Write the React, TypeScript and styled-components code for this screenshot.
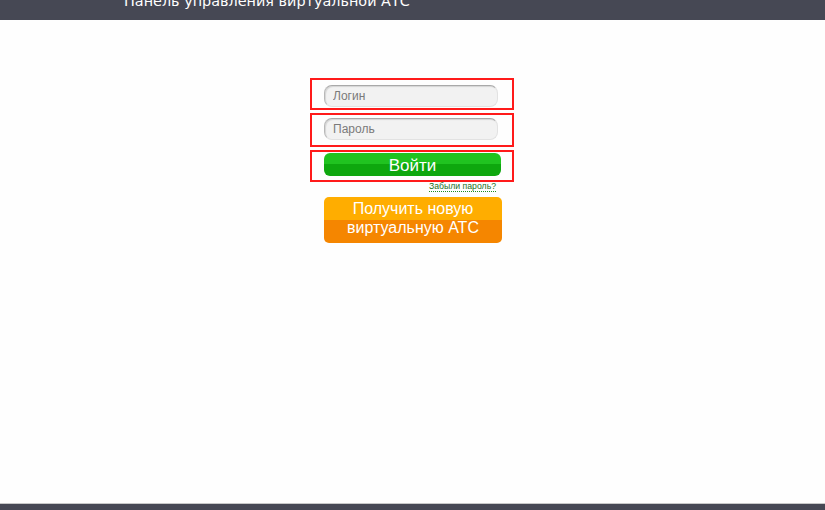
import React from "react";
import styled, { createGlobalStyle } from "styled-components";

const Global = createGlobalStyle`
  html, body { margin: 0; padding: 0; background: #fefefe; }
  body { font-family: "Liberation Sans", Arial, sans-serif; }
`;

const Page = styled.div`
  display: flex;
  flex-direction: column;
  height: 510px;
  overflow: hidden;
`;

const Header = styled.header`
  height: 20px;
  background: #464854;
  overflow: hidden;
  padding-left: 124px;
  flex-shrink: 0;
`;

const Title = styled.div`
  margin-top: -9px;
  line-height: 20px;
  font-family: "DejaVu Sans", sans-serif;
  font-size: 14.4px;
  color: #ffffff;
  white-space: nowrap;
`;

const Main = styled.main`
  flex: 1;
  display: flex;
  justify-content: center;
  padding-top: 58px;
  padding-right: 1px;
  background: #fefefe;
`;

const Form = styled.form`
  width: 204px;
  display: flex;
  flex-direction: column;
  gap: 3px;
`;

const Row = styled.div<{ $h: number; $pt: number }>`
  box-sizing: border-box;
  height: ${(p) => p.$h}px;
  border: 2px solid #ff1a1a;
  padding: ${(p) => p.$pt}px 0 0 12px;
`;

const Input = styled.input`
  box-sizing: border-box;
  display: block;
  width: 174px;
  height: 22px;
  border: 1px solid #e2e2e2;
  border-top-color: #a9a9a9;
  border-left-color: #b8b8b8;
  border-radius: 8px;
  background: #f2f2f2;
  box-shadow: inset 1px 1px 1px rgba(0, 0, 0, 0.12);
  padding: 0 8px;
  font-family: "Liberation Sans", Arial, sans-serif;
  font-size: 12px;
  color: #333;
  outline: none;
  &::placeholder { color: #7a7a7a; }
`;

const GreenButton = styled.button`
  box-sizing: border-box;
  display: block;
  width: 177px;
  height: 23px;
  border: none;
  border-radius: 6px;
  padding: 0;
  background: linear-gradient(#20c320 0%, #20c320 50%, #0ea70e 50%, #0ea70e 100%);
  color: #ffffff;
  font-family: "Liberation Sans", Arial, sans-serif;
  font-size: 17px;
  line-height: 25px;
  cursor: pointer;
`;

const LinkRow = styled.div`
  display: flex;
  justify-content: flex-end;
  padding-right: 18px;
  margin-top: -4px;
  height: 11px;
`;

const Forgot = styled.a`
  font-family: "Liberation Sans", Arial, sans-serif;
  font-size: 8.7px;
  line-height: 10px;
  color: #1f6e1f;
  text-decoration: none;
  border-bottom: 1px dotted #1f8a1f;
`;

const OrangeButton = styled.button`
  box-sizing: border-box;
  display: block;
  margin: 2px 0 0 14px;
  width: 178px;
  height: 46px;
  border: none;
  border-radius: 5px;
  padding: 0 0 4px;
  background: linear-gradient(#ffad00 0%, #ffad00 50%, #f58600 50%, #f58600 100%);
  color: #ffffff;
  font-family: "Liberation Sans", Arial, sans-serif;
  font-size: 16px;
  line-height: 19px;
  cursor: pointer;
`;

const Footer = styled.footer`
  height: 6px;
  flex-shrink: 0;
  background: #464854;
  border-top: 1px solid #c8c8c8;
`;

export default function App() {
  return (
    <>
      <Global />
      <Page>
        <Header>
          <Title>Панель управления виртуальной АТС</Title>
        </Header>
        <Main>
          <Form onSubmit={(e) => e.preventDefault()}>
            <Row $h={32} $pt={5}>
              <Input placeholder="Логин" />
            </Row>
            <Row $h={34} $pt={3}>
              <Input type="password" placeholder="Пароль" />
            </Row>
            <Row $h={32} $pt={1}>
              <GreenButton type="submit">Войти</GreenButton>
            </Row>
            <LinkRow>
              <Forgot href="#">Забыли пароль?</Forgot>
            </LinkRow>
            <OrangeButton type="button">
              Получить новую
              <br />
              виртуальную АТС
            </OrangeButton>
          </Form>
        </Main>
        <Footer />
      </Page>
    </>
  );
}
